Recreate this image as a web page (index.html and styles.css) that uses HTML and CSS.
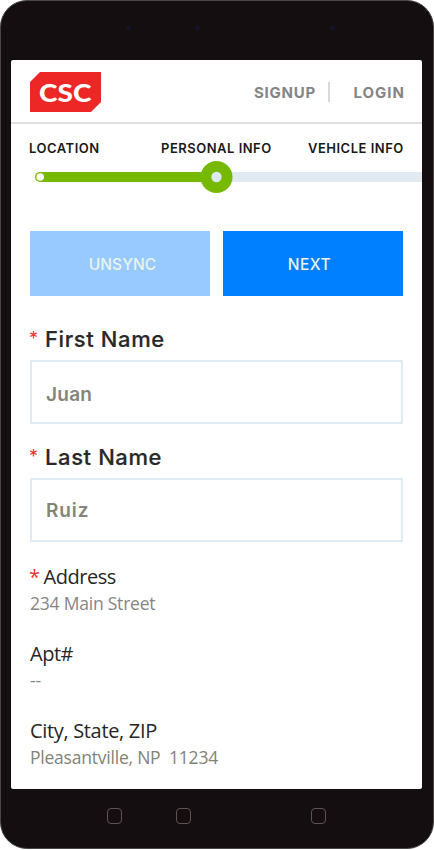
FILE: index.html
```html
<!DOCTYPE html>
<html lang="en">
<head>
<meta charset="utf-8">
<title>CSC – Personal Info</title>
<link rel="stylesheet" href="styles.css">
</head>
<body>
<div class="phone">
  <div class="sensors"><i></i><i></i><i></i></div>
  <main class="screen">
    <header class="header">
      <div class="logo"><span>CSC</span></div>
      <nav class="nav"><a class="signup">SIGNUP</a><i class="divider"></i><a class="login">LOGIN</a></nav>
    </header>
    <div class="steps">
      <span class="location">LOCATION</span><span class="personal">PERSONAL INFO</span><span class="vehicle">VEHICLE INFO</span>
    </div>
    <svg class="progress" width="411" height="34" viewBox="0 0 411 34">
      <path d="M205 12H411V22H205Z" fill="#e0eaf0"/>
      <rect x="24" y="12" width="190" height="10" rx="5" fill="#76b900"/>
      <circle cx="29.2" cy="17" r="3.8" fill="#fff"/>
      <circle cx="205.5" cy="17" r="16" fill="#76b900"/>
      <circle cx="205.5" cy="17" r="5.2" fill="#dce9f1"/>
    </svg>
    <div class="buttons">
      <button class="unsync"><span>UNSYNC</span></button>
      <button class="next"><span>NEXT</span></button>
    </div>
    <section class="field">
      <div class="label"><b>*</b><span class="first-label">First Name</span></div>
      <div class="input"><span class="first-value">Juan</span></div>
    </section>
    <section class="field">
      <div class="label"><b>*</b><span class="last-label">Last Name</span></div>
      <div class="input"><span class="last-value">Ruiz</span></div>
    </section>
    <section class="detail">
      <h2><b>*</b><span class="address-label">Address</span></h2>
      <p><span class="street">234 Main Street</span></p>
    </section>
    <section class="detail">
      <h2><span class="apt-label">Apt#</span></h2>
      <p><span>--</span></p>
    </section>
    <section class="detail">
      <h2><span class="city-label">City, State, ZIP</span></h2>
      <p class="warm"><span class="city">Pleasantville, NP&nbsp; 11234</span></p>
    </section>
  </main>
  <div class="keys"><i></i><i></i><i></i></div>
</div>
</body>
</html>
```

FILE: styles.css
```css
* { box-sizing: border-box; }
body { margin: 0; background: #fff; font-family: Inter, "Liberation Sans", sans-serif; }
.phone { width: 434px; height: 849px; background: #150e10; border: 1px solid #4b4645; border-radius: 27px; padding: 0 11px 0 10px; overflow: hidden; }
.sensors { height: 59px; display: flex; padding: 24px 0 0 115px; gap: 64px; }
.sensors i { width: 5px; height: 5px; border-radius: 50%; background: #151229; }
.sensors i:last-child { margin-left: 66px; }
.screen { width: 411px; height: 729px; background: #fff; border-radius: 2px; overflow: hidden; }
.header { height: 64px; border-bottom: 2px solid #dfdfdf; display: flex; justify-content: space-between; padding: 12px 17px 0 19px; }
.logo { width: 71px; height: 40px; background: #ed2626; clip-path: polygon(10px 0, 100% 0, 100% 30px, 61px 100%, 0 100%, 0 10px); color: #fff; font: 900 25px/40px Lato, sans-serif; padding-left: 9px; }
.logo span { display: inline-block; transform: scaleX(1.12); transform-origin: left; }
.nav { display: flex; height: 40px; align-items: center; font-size: 15px; font-weight: 700; color: #858585; }
.signup { letter-spacing: .75px; }
.login { letter-spacing: 1px; }
.divider { width: 2px; height: 20px; background: #d8d8d8; margin: 0 23px 0 12.5px; }
.steps { height: 53px; display: flex; padding: 16px 0 0 18px; font-size: 13px; font-weight: 600; line-height: 17px; color: #191919; white-space: nowrap; letter-spacing: .5px; }
.location { width: 132px; }
.personal { width: 147px; }
.progress { display: block; margin-top: -17px; }
.buttons { display: grid; grid-template-columns: 180px 180px; gap: 13px; padding: 0 19px; margin-top: 37px; }
button { height: 65px; border: 0; padding: 2px 0 0; font: 500 15.5px Inter, sans-serif; color: #eaf4e9; background: #99caff; text-align: center; }
.unsync { padding-left: 5px; letter-spacing: .1px; }
.next { background: #007fff; padding-right: 7px; letter-spacing: .5px; }
.field { height: 118px; padding: 0 19px; }
.field:nth-of-type(1) { margin-top: 28px; }
.label { height: 36px; display: flex; color: #292929; font-size: 22px; line-height: 31px; font-weight: 500; letter-spacing: .6px; -webkit-text-stroke: .2px; }
b { width: 15px; color: #ef3030; font-weight: 400; font-size: 18px; letter-spacing: 0; -webkit-text-stroke: 0; }
.label b { margin-left: -1px; width: 16px; line-height: 29px; }
.input { height: 64px; width: 373px; border: 2px solid #dfebf2; padding: 3px 0 0 14px; line-height: 60px; font-size: 19px; font-weight: 600; letter-spacing: .25px; color: #858577; }
.last-value { letter-spacing: .9px; }
.field + .field .input { padding-top: 1px; }
.detail { height: 77px; padding: 0 19px; font-family: "Open Sans", "Noto Sans", sans-serif; white-space: nowrap; position: relative; top: 3px; }
h2 { display: flex; margin: 0; height: 28px; line-height: 28px; font-weight: 400; font-size: 20px; letter-spacing: -.33px; color: #262626; }
h2 b { width: 14px; font-size: 20px; margin-left: -1px; margin-right: .5px; }
.address-label { letter-spacing: -.45px; }
.apt-label { letter-spacing: -.5px; }
p { margin: 0; height: 24px; line-height: 24px; font-size: 17.5px; letter-spacing: -.22px; color: #858585; }
.warm { color: #828277; }
.keys { display: flex; padding: 19px 0 0 96px; }
.keys i { width: 15px; height: 16px; border: 1px solid #625252; border-radius: 4px; }
.keys i:nth-child(2) { margin-left: 54px; }
.keys i:nth-child(3) { margin-left: 120px; }
```
